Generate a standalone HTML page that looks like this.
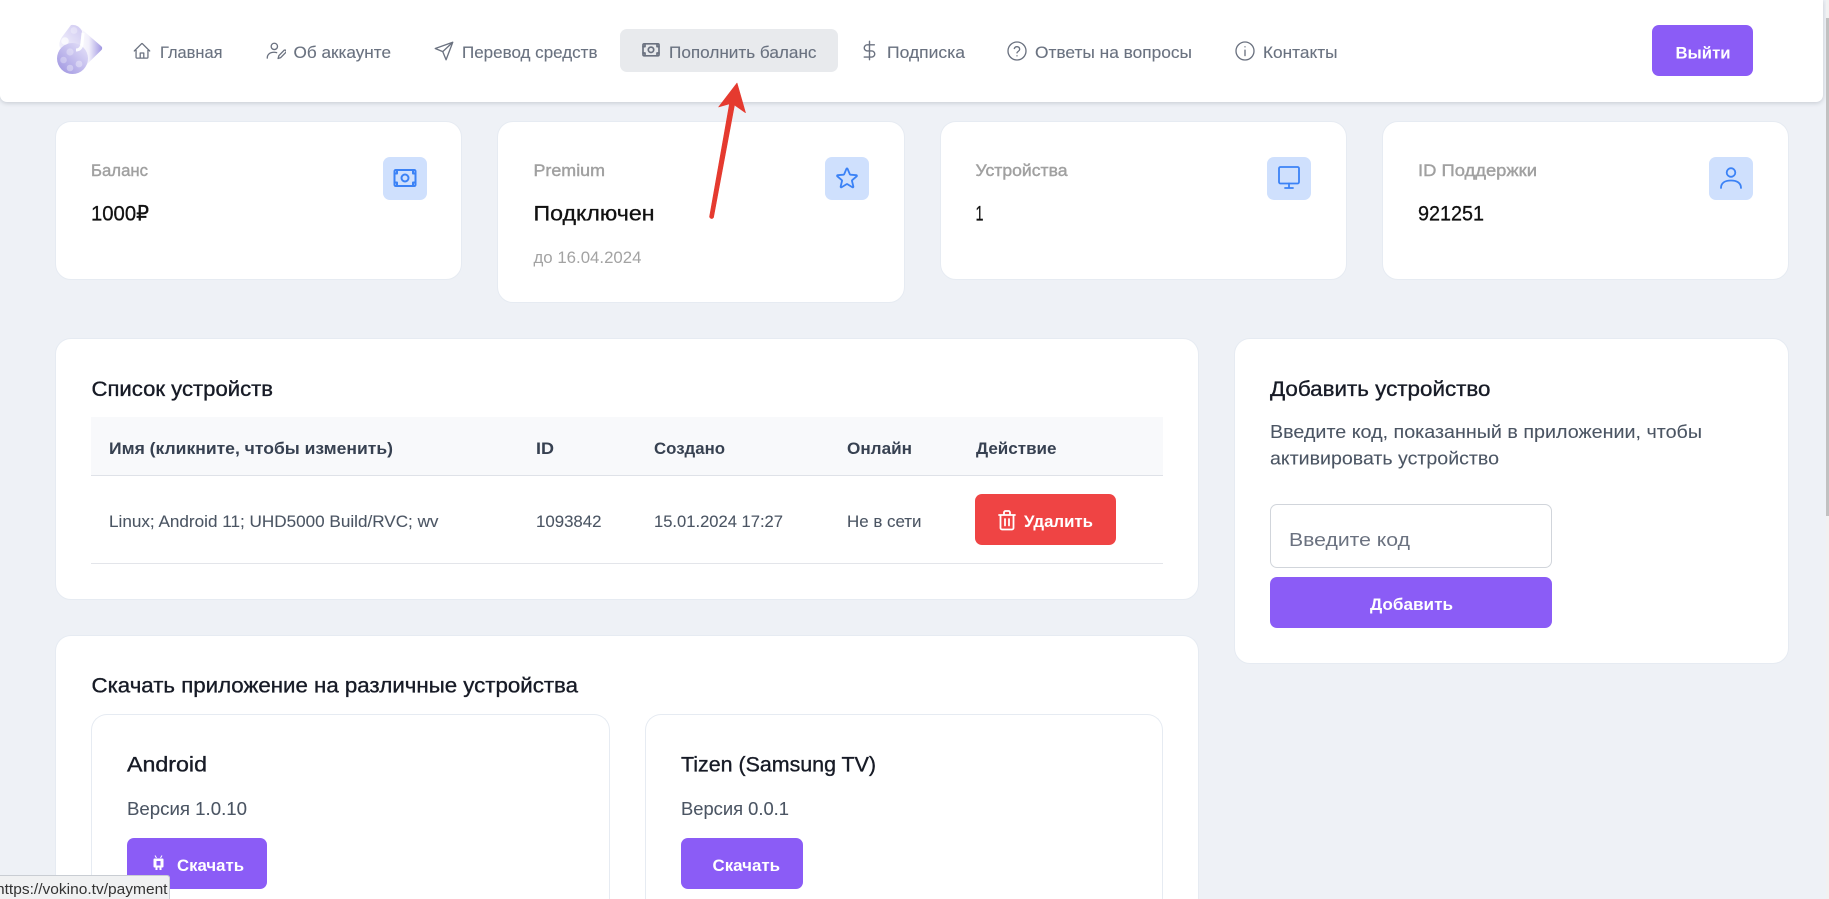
<!DOCTYPE html>
<html lang="ru">
<head>
<meta charset="utf-8">
<title>VOKINO</title>
<style>
html,body{margin:0;padding:0;width:1829px;height:899px;overflow:hidden;background:#eef1f6;font-family:"Liberation Sans",sans-serif}
#w{position:relative;width:1829px;height:899px;overflow:hidden;background:#eef1f6}
.b{position:absolute;box-sizing:border-box}
.card{background:#fff;border:1px solid #e6ebf2;border-radius:16px}
.open{border-bottom:0;border-bottom-left-radius:0;border-bottom-right-radius:0}
.ic{background:#cfe0fd;border-radius:7px;width:44px;height:43px;top:157px}
.btn{background:#8b5cf6;border-radius:7px}
svg.o{position:absolute;left:0;top:0}
text{font-family:"Liberation Sans","DejaVu Sans",sans-serif;white-space:pre}
.nav{font-size:16.3px;fill:#6a7280;stroke:#6a7280;stroke-width:.12px}
.lb{font-size:16.3px;fill:#a0a0a0;stroke:#a0a0a0;stroke-width:.4px}
.val{font-size:21px;fill:#111;stroke:#111;stroke-width:.3px}
.sub{font-size:16.3px;fill:#a3a3a3}
.h{font-size:21px;fill:#171b26;stroke:#171b26;stroke-width:.35px}
.th{font-size:16.3px;font-weight:bold;fill:#374151}
.td{font-size:16.3px;fill:#4b5563;stroke:#4b5563;stroke-width:.08px}
.p{font-size:18.6px;fill:#4b5563;stroke:#4b5563;stroke-width:.08px}
.ph{font-size:18.6px;fill:#6b7280}
.bt{font-size:16.3px;font-weight:bold;fill:#fff}
.st{font-size:15px;fill:#333}
.ni{fill:none;stroke:#6b7280;stroke-width:1.6;stroke-linecap:round;stroke-linejoin:round}
.bi{fill:none;stroke:#3b82f6;stroke-width:1.8;stroke-linecap:round;stroke-linejoin:round}
.wi{fill:none;stroke:#fff;stroke-width:1.8;stroke-linecap:round;stroke-linejoin:round}
</style>
</head>
<body>
<div id="w">
<!-- header -->
<div class="b" style="left:0;top:0;width:1823px;height:102px;background:#fff;border-radius:0 0 7px 7px;box-shadow:0 1px 5px rgba(30,40,60,.2);z-index:2"></div>
<div class="b" style="left:620px;top:29px;width:218px;height:43px;background:#e8eaed;border-radius:7px;z-index:2"></div>
<div class="b btn" style="left:1652px;top:25px;width:101px;height:51px;z-index:2"></div>

<!-- stat cards -->
<div class="b card" style="left:55px;top:121px;width:407px;height:159px"></div>
<div class="b card" style="left:497px;top:121px;width:408px;height:182px"></div>
<div class="b card" style="left:940px;top:121px;width:407px;height:159px"></div>
<div class="b card" style="left:1382px;top:121px;width:407px;height:159px"></div>
<div class="b ic" style="left:383px"></div>
<div class="b ic" style="left:825px"></div>
<div class="b ic" style="left:1267px"></div>
<div class="b ic" style="left:1709px"></div>

<!-- devices -->
<div class="b card" style="left:55px;top:338px;width:1144px;height:262px"></div>
<div class="b" style="left:91px;top:417px;width:1072px;height:59px;background:#f8f9fb;border-bottom:1px solid #dfe2e8"></div>
<div class="b" style="left:91px;top:563px;width:1072px;height:1px;background:#e3e5ea"></div>
<div class="b" style="left:975px;top:494px;width:141px;height:51px;background:#ef4444;border-radius:7px"></div>

<!-- add device -->
<div class="b card" style="left:1234px;top:338px;width:555px;height:326px"></div>
<div class="b" style="left:1270px;top:504px;width:282px;height:64px;background:#fff;border:1px solid #d1d5db;border-radius:7px"></div>
<div class="b btn" style="left:1270px;top:577px;width:282px;height:51px"></div>

<!-- downloads -->
<div class="b card open" style="left:55px;top:635px;width:1144px;height:264px"></div>
<div class="b card open" style="left:91px;top:714px;width:519px;height:185px"></div>
<div class="b card open" style="left:645px;top:714px;width:518px;height:185px"></div>
<div class="b btn" style="left:127px;top:838px;width:140px;height:51px"></div>
<div class="b btn" style="left:681px;top:838px;width:122px;height:51px"></div>

<!-- scrollbar -->
<div class="b" style="left:1826px;top:0;width:3px;height:899px;background:#f1f1f1;z-index:3"></div>
<div class="b" style="left:1826px;top:18px;width:3px;height:498px;background:#c1c1c1;z-index:3"></div>

<svg class="o" width="1829" height="899" viewBox="0 0 1829 899" style="z-index:4;display:block">
<defs>
<linearGradient id="g1" x1="0" y1="1" x2="1" y2="0"><stop offset="0" stop-color="#9d93e0"/><stop offset="1" stop-color="#e8e5fa"/></linearGradient>
<linearGradient id="g2" x1="0" y1="0" x2="1" y2="0"><stop offset="0" stop-color="#ffffff"/><stop offset=".45" stop-color="#f1effb"/><stop offset="1" stop-color="#a096e2"/></linearGradient>
<linearGradient id="g3" x1="1" y1="0" x2="0" y2="1"><stop offset="0" stop-color="#cfc9f1"/><stop offset="1" stop-color="#f7f6fd"/></linearGradient>
</defs>

<!-- logo -->
<path d="M78 26 L101 46 Q103.500 48 101 50.500 L78 73 Z" fill="url(#g2)"/>
<path d="M71 25 Q78 24 82 31 L80 46 L71 52 L60 48 Q58 43 62 37 Z" fill="url(#g3)"/>
<circle cx="72.500" cy="58.500" r="15.500" fill="url(#g1)"/>
<circle cx="74" cy="30.500" r="3.400" fill="#fff" opacity=".3"/>
<circle cx="65" cy="41" r="3.800" fill="#fff" opacity=".7"/>
<circle cx="70" cy="52" r="3.600" fill="#fff" opacity=".3"/>
<circle cx="63.500" cy="60" r="3.300" fill="#fff" opacity=".3"/>
<circle cx="79" cy="64" r="3.400" fill="#fff" opacity=".35"/>
<circle cx="70" cy="68" r="3.300" fill="#fff" opacity=".35"/>
<path d="M83 33 L82 44 Q81 50 76 50" fill="none" stroke="#fff" stroke-width="3" opacity=".9"/>

<!-- nav icons -->
<svg x="132.500" y="41.500" width="19" height="19" viewBox="0 0 24 24" class="ni"><path d="M2.250 12l8.954-8.955c.44-.439 1.152-.439 1.591 0L21.750 12M4.500 9.750v10.125c0 .621.504 1.125 1.125 1.125H9.750v-6.500h4.500V21h4.125c.621 0 1.125-.504 1.125-1.125V9.750M8 21h8"/></svg>
<svg x="266" y="41" width="20" height="20" viewBox="0 0 24 24" class="ni"><circle cx="10" cy="6.500" r="3.800"/><path d="M1.500 20.500c0-4.500 3.500-7 8-7 1.200 0 2.300.15 3.300.5"/><path d="M14.500 21l1-3.500 6-6.200c.8-.7 2-.6 2.500.2.500.7.300 1.600-.3 2.200l-6 6.200z"/></svg>
<svg x="434" y="41" width="20" height="20" viewBox="0 0 24 24" class="ni"><path d="M22.500 1.500L1.500 9l9 3.800 4 9.700zM10.500 12.800L22.500 1.500"/></svg>
<svg x="642" y="41" width="18" height="18" viewBox="0 0 18 18" class="ni" style="stroke-width:1.700"><rect x="1" y="2.800" width="16" height="12" rx="1"/><circle cx="9" cy="8.800" r="2.700"/><path d="M1 5.600h2V2.800M17 5.600h-2V2.800M1 12h2v2.800M17 12h-2v2.800"/></svg>
<svg x="859" y="39" width="21" height="23" viewBox="0 0 24 24" class="ni"><path d="M12 1.500v21M17.500 5.500H9.500a3.500 3.500 0 0 0 0 7h5a3.500 3.500 0 0 1 0 7H6"/></svg>
<svg x="1007" y="41" width="20" height="20" viewBox="0 0 24 24" class="ni"><circle cx="12" cy="12" r="10.800"/><path d="M8.800 9a3.300 3.300 0 0 1 6.400 1c0 2.200-3.200 2.800-3.200 4.200M12 17.800h.01"/></svg>
<svg x="1235" y="41" width="20" height="20" viewBox="0 0 24 24" class="ni"><circle cx="12" cy="12" r="10.800"/><path d="M12 17.500v-6.500M12 7h.01"/></svg>

<!-- nav text -->
<text class="nav" x="160" y="58" textLength="62.500" lengthAdjust="spacingAndGlyphs">Главная</text>
<text class="nav" x="293.500" y="58" textLength="97.500" lengthAdjust="spacingAndGlyphs">Об аккаунте</text>
<text class="nav" x="462" y="58" textLength="135.500" lengthAdjust="spacingAndGlyphs">Перевод средств</text>
<text class="nav" x="669" y="58" textLength="147.500" lengthAdjust="spacingAndGlyphs">Пополнить баланс</text>
<text class="nav" x="887" y="58" textLength="78" lengthAdjust="spacingAndGlyphs">Подписка</text>
<text class="nav" x="1035" y="58" textLength="157" lengthAdjust="spacingAndGlyphs">Ответы на вопросы</text>
<text class="nav" x="1263" y="58" textLength="74.500" lengthAdjust="spacingAndGlyphs">Контакты</text>
<text class="bt" x="1675.500" y="58.500" textLength="55" lengthAdjust="spacingAndGlyphs">Выйти</text>

<!-- stat text -->
<text class="lb" x="91" y="176" textLength="57" lengthAdjust="spacingAndGlyphs">Баланс</text>
<text class="val" x="91" y="220.500" textLength="58" lengthAdjust="spacingAndGlyphs">1000₽</text>
<text class="lb" x="533.500" y="176" textLength="71.500" lengthAdjust="spacingAndGlyphs">Premium</text>
<text class="val" x="533.500" y="220.500" textLength="121" lengthAdjust="spacingAndGlyphs">Подключен</text>
<text class="sub" x="533.500" y="263" textLength="108" lengthAdjust="spacingAndGlyphs">до 16.04.2024</text>
<text class="lb" x="975.500" y="176" textLength="92" lengthAdjust="spacingAndGlyphs">Устройства</text>
<text class="val" x="975.500" y="220.500" textLength="8" lengthAdjust="spacingAndGlyphs">1</text>
<text class="lb" x="1418" y="176" textLength="119" lengthAdjust="spacingAndGlyphs">ID Поддержки</text>
<text class="val" x="1418" y="220.500" textLength="66" lengthAdjust="spacingAndGlyphs">921251</text>

<!-- stat icons -->
<svg x="392" y="166.500" width="26" height="24" viewBox="0 0 26 24" class="bi" style="stroke-width:2"><rect x="2.500" y="3.500" width="21" height="16" rx="1.200"/><circle cx="13" cy="11.500" r="3.500"/><path d="M2.500 7h2.500V3.500M23.500 7h-2.500V3.500M2.500 16h2.500v3.500M23.500 16h-2.500v3.500"/></svg>
<svg x="834" y="165" width="26" height="26" viewBox="0 0 24 24" class="bi" style="stroke-width:1.700"><path d="M11.480 3.499a.562.562 0 011.040 0l2.125 5.111a.563.563 0 00.475.345l5.518.442c.499.04.701.663.321.988l-4.204 3.602a.563.563 0 00-.182.557l1.285 5.385a.562.562 0 01-.84.61l-4.725-2.885a.562.562 0 00-.586 0L6.982 20.540a.562.562 0 01-.84-.61l1.285-5.386a.562.562 0 00-.182-.557l-4.204-3.602a.563.563 0 01.321-.988l5.518-.442a.563.563 0 00.475-.345L11.480 3.500z"/></svg>
<svg x="1277" y="165" width="24" height="25" viewBox="0 0 24 25" class="bi"><rect x="2" y="2" width="20" height="16.500" rx="1.500"/><path d="M12 18.500v4.500M8 23h8"/></svg>
<svg x="1719" y="166" width="24" height="24" viewBox="0 0 24 24" class="bi"><circle cx="12" cy="6.500" r="4.300"/><path d="M2 22c0-5 4-7.500 10-7.500s10 2.500 10 7.500"/></svg>

<!-- devices text -->
<text class="h" x="91.500" y="396" textLength="181.500" lengthAdjust="spacingAndGlyphs">Список устройств</text>
<text class="th" x="109" y="454" textLength="284" lengthAdjust="spacingAndGlyphs">Имя (кликните, чтобы изменить)</text>
<text class="th" x="536" y="454" textLength="18" lengthAdjust="spacingAndGlyphs">ID</text>
<text class="th" x="654" y="454" textLength="71" lengthAdjust="spacingAndGlyphs">Создано</text>
<text class="th" x="847" y="454" textLength="65" lengthAdjust="spacingAndGlyphs">Онлайн</text>
<text class="th" x="976" y="454" textLength="80.500" lengthAdjust="spacingAndGlyphs">Действие</text>
<text class="td" x="109" y="527" textLength="329.500" lengthAdjust="spacingAndGlyphs">Linux; Android 11; UHD5000 Build/RVC; wv</text>
<text class="td" x="536" y="527" textLength="65.500" lengthAdjust="spacingAndGlyphs">1093842</text>
<text class="td" x="654" y="527" textLength="129" lengthAdjust="spacingAndGlyphs">15.01.2024 17:27</text>
<text class="td" x="847" y="527" textLength="74.500" lengthAdjust="spacingAndGlyphs">Не в сети</text>
<text class="bt" x="1024" y="527" textLength="69" lengthAdjust="spacingAndGlyphs">Удалить</text>
<svg x="996" y="509" width="22" height="22" viewBox="0 0 22 22" class="wi"><path d="M3 6h16M8 6V3.500c0-.8.600-1.500 1.500-1.500h3c.900 0 1.500.700 1.500 1.500V6M4.500 6v13c0 .800.700 1.500 1.500 1.500h10c.800 0 1.500-.700 1.500-1.500V6M9 10v6.500M13 10v6.500"/></svg>

<!-- add device text -->
<text class="h" x="1270" y="396" textLength="220.500" lengthAdjust="spacingAndGlyphs">Добавить устройство</text>
<text class="p" x="1270" y="438" textLength="432" lengthAdjust="spacingAndGlyphs">Введите код, показанный в приложении, чтобы</text>
<text class="p" x="1270" y="464.500" textLength="229" lengthAdjust="spacingAndGlyphs">активировать устройство</text>
<text class="ph" x="1289" y="546" textLength="121" lengthAdjust="spacingAndGlyphs">Введите код</text>
<text class="bt" x="1370" y="610" textLength="83" lengthAdjust="spacingAndGlyphs">Добавить</text>

<!-- downloads text -->
<text class="h" x="91.500" y="692.500" textLength="486.500" lengthAdjust="spacingAndGlyphs">Скачать приложение на различные устройства</text>
<text class="h" x="127" y="771.500" textLength="80" lengthAdjust="spacingAndGlyphs">Android</text>
<text class="p" x="127" y="815" textLength="120" lengthAdjust="spacingAndGlyphs">Версия 1.0.10</text>
<text class="bt" x="177" y="871" textLength="67" lengthAdjust="spacingAndGlyphs">Скачать</text>
<text class="h" x="681" y="771.500" textLength="195" lengthAdjust="spacingAndGlyphs">Tizen (Samsung TV)</text>
<text class="p" x="681" y="815" textLength="108" lengthAdjust="spacingAndGlyphs">Версия 0.0.1</text>
<text class="bt" x="712.500" y="871" textLength="67.500" lengthAdjust="spacingAndGlyphs">Скачать</text>
<svg x="152" y="855" width="13" height="16" viewBox="0 0 13 16"><path d="M3 .5L4.500 3M10 .5L8.500 3" stroke="#fff" stroke-width="1" fill="none"/><path fill="#fff" fill-rule="evenodd" d="M2.500 3.500h8q1 0 1 1v7q0 1-1 1H9.500v2.500h-2V12.500h-2V15h-2V12.500h-1q-1 0-1-1v-7q0-1 1-1zM4.500 6v4.500h4V6z"/></svg>

<!-- annotation arrow -->
<path d="M709.500 217 Q711.500 220 713.500 217.500 L734.500 105 L745.500 112.700 L737 83 L718.600 107 L729.500 103.800 Z" fill="#e53a2f" stroke="#e53a2f" stroke-width=".6" stroke-linejoin="round"/>

<!-- status bubble -->
<path d="M0 875.500H167q3 0 3 3V899H0z" fill="#f0f1f2"/>
<path d="M0 875.500H167q2.500 0 2.500 3V899" fill="none" stroke="#c9cdd3" stroke-width="1"/>
<text class="st" x="-4" y="894" textLength="171.500" lengthAdjust="spacingAndGlyphs">https://vokino.tv/payment</text>
</svg>
</div>
</body>
</html>
